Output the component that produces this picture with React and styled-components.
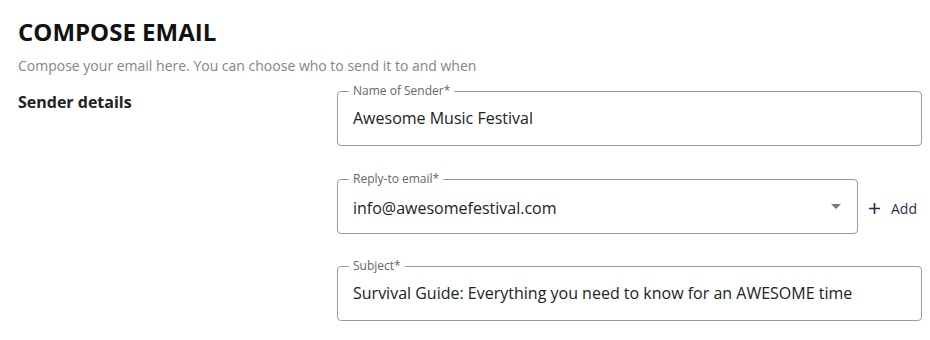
import React from 'react';
import styled, { createGlobalStyle } from 'styled-components';

const GlobalStyle = createGlobalStyle`
  body {
    margin: 0;
    background: #fff;
    font-family: 'Open Sans', 'Liberation Sans', sans-serif;
  }
`;

const Page = styled.div`
  padding: 15px 8px 0 18px;
`;

const Title = styled.h1`
  margin: 0;
  font-size: 24px;
  line-height: 34px;
  font-weight: 700;
  color: #111;
`;

const Subtitle = styled.p`
  margin: 7px 0 0;
  font-size: 14px;
  line-height: 20px;
  color: #858585;
`;

const Section = styled.div`
  display: grid;
  grid-template-columns: 319px 1fr;
  margin-top: 15px;
`;

const SectionTitle = styled.h2`
  margin: 0;
  font-size: 16px;
  line-height: 22px;
  font-weight: 700;
  color: #222;
`;

const Fields = styled.div`
  display: flex;
  flex-direction: column;
  gap: 32px;
`;

const Row = styled.div`
  display: flex;
  align-items: center;
  margin-top: 1px;
`;

const Field = styled.div`
  position: relative;
  flex: 1 0 auto;
  height: 55px;
  box-sizing: border-box;
  border: 1px solid #9c9c9c;
  border-radius: 4px;
  display: flex;
  align-items: center;
  padding: 0 15px;
`;

const Label = styled.span`
  position: absolute;
  top: -9px;
  left: 11px;
  padding: 0 4px;
  background: #fff;
  font-size: 12px;
  line-height: 16px;
  color: #666;
`;

const Value = styled.span`
  flex: 1;
  font-size: 16px;
  color: #222;
  padding-top: ${({ $select }) => ($select ? '4px' : '0')};
  margin-top: -1px;
`;

const Caret = styled.span`
  width: 0;
  height: 0;
  border-left: 5px solid transparent;
  border-right: 5px solid transparent;
  border-top: 5px solid #7a7a7a;
  margin-right: 1px;
`;

const AddButton = styled.button`
  width: 64px;
  display: flex;
  align-items: center;
  justify-content: flex-end;
  gap: 11px;
  border: 0;
  background: none;
  padding: 4px 5px 0 0;
  font-family: inherit;
  font-size: 14px;
  color: #2b2d4f;
  cursor: pointer;
`;

const PlusIcon = () => (
  <svg width="11" height="11" viewBox="0 0 11 11" fill="none" stroke="#2b2d4f" strokeWidth="1.7">
    <path d="M5.5 0v11M0 5.5h11" />
  </svg>
);

const TextField = ({ label, value, select }) => (
  <Field>
    <Label>{label}</Label>
    <Value $select={select}>{value}</Value>
    {select && <Caret />}
  </Field>
);

const App = () => (
  <Page>
    <GlobalStyle />
    <Title>COMPOSE EMAIL</Title>
    <Subtitle>Compose your email here. You can choose who to send it to and when</Subtitle>
    <Section>
      <SectionTitle>Sender details</SectionTitle>
      <Fields>
        <TextField label="Name of Sender*" value="Awesome Music Festival" />
        <Row>
          <TextField label="Reply-to email*" value="info@awesomefestival.com" select />
          <AddButton>
            <PlusIcon />
            Add
          </AddButton>
        </Row>
        <TextField
          label="Subject*"
          value="Survival Guide: Everything you need to know for an AWESOME time"
        />
      </Fields>
    </Section>
  </Page>
);

export default App;
